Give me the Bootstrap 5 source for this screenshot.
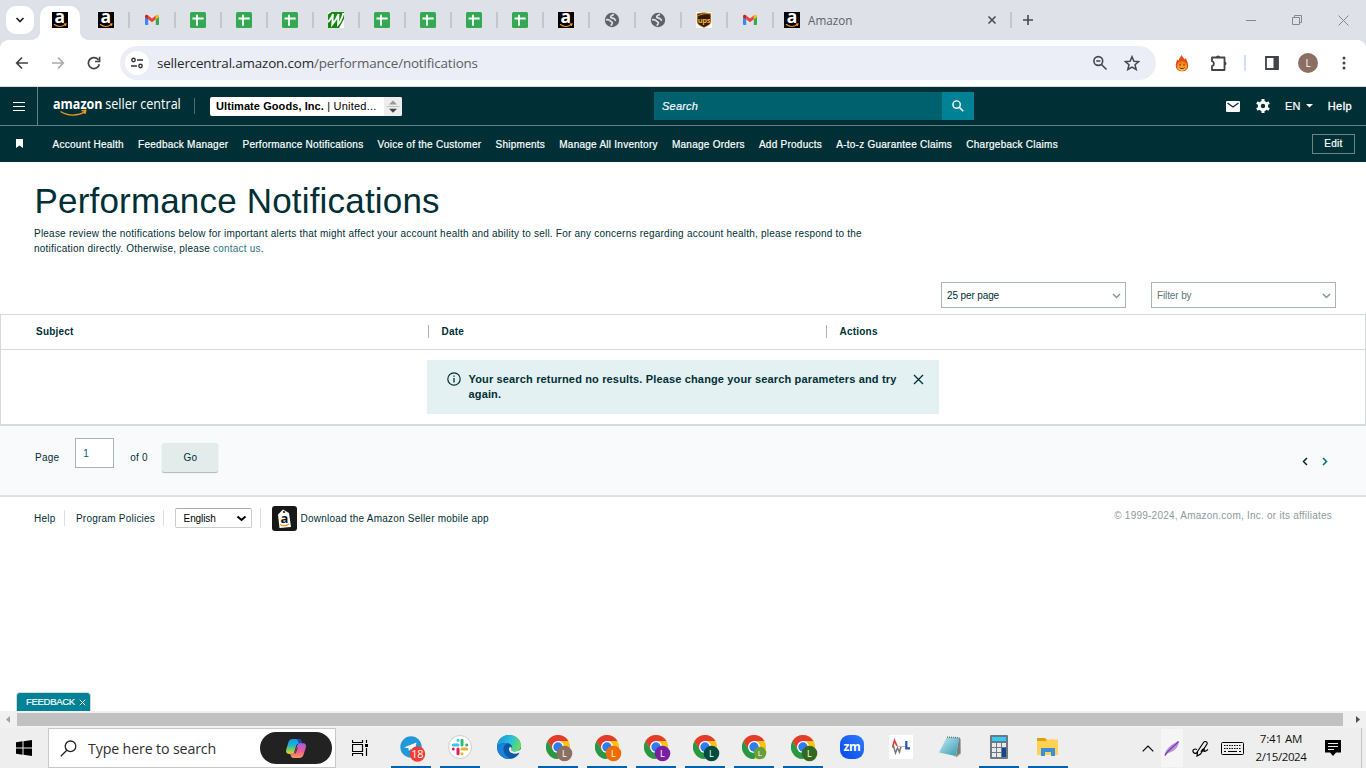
<!DOCTYPE html>
<html lang="en">
<head>
<meta charset="utf-8">
<title>Performance Notifications</title>
<link href="https://cdn.jsdelivr.net/npm/bootstrap@5.3.0/dist/css/bootstrap.min.css" rel="stylesheet">
<style>
body{width:1366px;height:768px;overflow:hidden;font-family:"Liberation Sans",Arial,sans-serif;font-size:10px;letter-spacing:.22px;line-height:15px;color:#002f36;background:#fff}
svg{display:block;flex:none}
.seg{font-family:"Open Sans","Noto Sans",sans-serif;letter-spacing:0}
.tabstrip{height:40px;background:#dee1e8}
.tabmenu{width:28px;height:28px;border-radius:10px;background:#fff;margin:6px 6px 0}
.tab-on{width:40px;height:34px;margin-top:6px;padding-top:6px;background:#fff;border-radius:10px 10px 0 0;position:relative}
.tab-on::before,.tab-on::after{content:"";position:absolute;bottom:0;width:8px;height:8px}
.tab-on::before{left:-8px;background:radial-gradient(circle at 0 0,transparent 7.6px,#fff 8px)}
.tab-on::after{right:-8px;background:radial-gradient(circle at 100% 0,transparent 7.6px,#fff 8px)}
.tab-set{margin-left:2px}
.fav{width:46px;height:40px;padding-left:16px}
.fav::after{content:"";width:2px;height:16px;background:#c6c6c6;margin-right:-2px}
.tab-wide{width:239px;padding-left:12px}
.tab-name{font-size:11.7px;color:#5f6368;margin:1px auto 0 8px}
.tab-end{width:2px;height:16px;background:#c6c6c6;margin-right:-1px}
.toolbar{height:47px;background:#fff;border-bottom:1px solid #dadce0;position:relative}
.toolbar::before,.toolbar::after{content:"";position:absolute;top:0;width:8px;height:8px}
.toolbar::before{left:0;background:radial-gradient(circle at 100% 100%,transparent 7.6px,#dee1e8 8px)}
.toolbar::after{right:0;background:radial-gradient(circle at 0 100%,transparent 7.6px,#dee1e8 8px)}
.omni{width:1036px;height:34px;border-radius:17px;background:#ebeef7;margin-left:19px;padding-left:5px}
.site{width:24px;height:24px;border-radius:50%;background:#fff}
.url{font-size:13.4px;letter-spacing:-.155px;color:#5a5d61;margin-left:8px}
.url b{font-weight:400;color:#26282b}
.avatar{width:20px;height:20px;border-radius:50%;background:#8d6e63;color:#fff;font-size:10px;margin-left:19px}
.sc-top{height:39px;background:#002f36;border-bottom:1px solid #647f83;color:#fff;font-size:11px}
.burger{width:38px;height:38px;border-right:1px solid #647f83}
.brand{width:128px;height:24px;margin-left:14.5px}
.brand-bar{width:1px;height:16px;background:#4d6b70;margin-left:13.5px}
.account{width:192px;height:19px;margin-left:15px;background:#fff;border-radius:2px;color:#000;overflow:hidden;padding-left:6px;line-height:19px}
.account b{letter-spacing:.08px}
.spin{width:18px;height:19px;background:#ededed}
.search-in{width:288px;height:28px;margin-left:252px;background:#00616e;padding-left:8px;line-height:28px;font-style:italic;-webkit-text-stroke:.15px #fff}
.search-go{width:32px;height:28px;background:#008296}
.sc-nav{height:36px;background:#002f36;color:#fff;font-size:10px;letter-spacing:.255px;-webkit-text-stroke:.2px #fff;padding:1px 11px 0 15.5px}
.sc-links{gap:14.2px;margin-left:30px}
.edit{width:43px;height:20px;border:1px solid #6b8488;line-height:18px;margin-top:-2px}
.page{height:549px;position:relative}
.title{font-size:35px;line-height:42px;letter-spacing:.18px;font-weight:400;margin:0;padding:18px 0 0 34.5px}
.intro{width:860px;padding:4px 0 0 34px;letter-spacing:.222px}
.filters{height:26px;margin-top:26px;padding-right:30px;gap:25px}
.dropbox{width:185px;height:26px;border:1px solid #a5b5b7;padding:0 4px 0 5px;letter-spacing:-.12px}
.grid-box{height:112px;margin-top:6px;border:1px solid #d5dbdb;border-bottom:2px solid #d5dbdb}
.grid-head{height:35px;border-bottom:1px solid #d5dbdb;font-weight:700;padding-bottom:1px}
.grid-head div{line-height:13px}
.grid-head div+div{border-left:1px solid #a5b5b7;padding-left:12.5px}
.notice{width:512px;height:54px;margin:10px 0 0 426px;background:#e3f1f2;padding:12px 15px 0 20px;font-size:11px;font-weight:700;letter-spacing:.153px}
.pager{height:71px;background:#f9fafb;border-bottom:2px solid #dfe2e4;padding-left:35px}
.pageno{width:39px;height:30px;border:1px solid #a5b5b7;background:#fff;padding-left:7px;line-height:29px;margin:12px 0 0 16px;color:#00606e}
.go{width:56px;height:29px;background:#e3eceb;border-radius:2px;box-shadow:0 1px 1px #aab7b8;line-height:29px;margin:17px 0 0 14.5px}
.foot{height:42px;padding:0 34px}
.vr-line{width:1px;height:16px;background:#dcdfe1}
.lang{width:77px;height:20px;border:1px solid #ccc;border-top-color:#aaa;border-radius:2px;padding:0 4px 0 8px;color:#000;letter-spacing:-.1px}
.feedback{position:absolute;left:16px;bottom:0;width:75px;height:19px;background:#008296;border:1px solid #d5dbdb;border-bottom:0;border-radius:4px 4px 0 0;color:#fff;font-size:9.6px;letter-spacing:-.36px;line-height:18px;padding-left:9px;-webkit-text-stroke:.15px #fff}
.hscroll{height:17px;background:#f1f1f1}
.thumb{width:1326px;height:13px;background:#c1c1c1}
.taskbar{height:40px;background:#eee;color:#000}
.start{width:48px;height:40px}
.winsearch{width:288px;height:40px;background:#fff;border:1px solid #c8c8c8;padding-left:11px;font-size:14.2px;color:#303030}
.copilot{width:72px;height:32px;border-radius:16px;background:#222;margin-right:3px}
.app{width:40px;height:40px;margin-right:9px;border-bottom:2px solid transparent}
.open{border-color:#0063b1}
.badged{margin:3px 0 0 3px}
.clock{width:70px;font-size:11.5px;line-height:18px;letter-spacing:-.4px;color:#111;margin-left:2px}
</style>
</head>
<body class="d-flex flex-column">
<svg width="0" height="0" class="position-absolute" aria-hidden="true">
<defs>
<linearGradient id="cpa" x1="0" y1="0" x2="0" y2="1"><stop offset="0" stop-color="#1797e8"/><stop offset=".45" stop-color="#20b8c8"/><stop offset=".75" stop-color="#8bd04a"/><stop offset="1" stop-color="#f7c82e"/></linearGradient>
<linearGradient id="cpb" x1="0" y1="0" x2="0" y2="1"><stop offset="0" stop-color="#a45de8"/><stop offset=".55" stop-color="#ee5c93"/><stop offset="1" stop-color="#f99a55"/></linearGradient>
<linearGradient id="edg" x1="0" y1=".2" x2="1" y2=".5"><stop offset="0" stop-color="#1b8fe0"/><stop offset=".55" stop-color="#2bc0dc"/><stop offset="1" stop-color="#66e05a"/></linearGradient>
<linearGradient id="fire" x1="0" y1="0" x2="0" y2="1"><stop offset="0" stop-color="#f0701a"/><stop offset="1" stop-color="#fbc02d"/></linearGradient>
<linearGradient id="zoomg" x1="0" y1="1" x2="1" y2="0"><stop offset="0" stop-color="#0848e8"/><stop offset="1" stop-color="#2f7bff"/></linearGradient>
<linearGradient id="noteg" x1="0" y1="0" x2="1" y2="1"><stop offset="0" stop-color="#c9edf3"/><stop offset="1" stop-color="#2f97ae"/></linearGradient>
</defs>
</svg>
<svg class="d-none" aria-hidden="true">
<symbol id="amz" viewBox="0 0 16 16"><path fill="#000" d="M0 0h16v16H0z"/><text x="8" y="11.2" font-family="Open Sans,sans-serif" font-size="17.5" font-weight="700" text-anchor="middle" fill="#fff">a</text><path d="M2 12.300c3.500 2.600 8 2.500 11.300.3M11.800 12l2.200-.1-.6 1.900" fill="none" stroke="#f7981d" stroke-width="1.100"/></symbol>
<symbol id="gml" viewBox="0 0 16 16"><path fill="#4285f4" d="M1 4.500v7.700c0 .5.400.8.800.8h2.400V7z"/><path fill="#34a853" d="M15 4.500v7.700c0 .5-.4.800-.8.800h-2.400V7z"/><path fill="#ea4335" d="M4.200 3.500L8 6.400l3.800-2.900V7.300L8 10.200 4.200 7.300z"/><path fill="#fbbc04" d="M11.800 3.500c1.400-1.200 3.200-.6 3.200 1v.6l-3.200 2.300z"/><path fill="#c5221f" d="M4.200 3.500C2.800 2.300 1 2.900 1 4.500v.6l3.200 2.300z"/></symbol>
<symbol id="sht" viewBox="0 0 16 16"><rect width="16" height="16" rx="1.500" fill="#34a853"/><path d="M2.500 6.500h11.200M7 2.800v11" stroke="#fff" stroke-width="1.800"/></symbol>
<symbol id="glb" viewBox="0 0 16 16"><circle cx="8" cy="8" r="7.200" fill="#5f6368"/><path d="M2 7.800c1.800-.4 3.600.1 4.400 1.200.7 1 2.200.6 2 2-.2 1.300-1 1.900-1.700 2.600" fill="none" stroke="#dee1e8" stroke-width="1.700"/><path d="M9.800 2.300C8 3.600 6.200 3.700 6.700 5.200c.6 1.300 2.300.6 3.400 1.500.9.800.8 1.500 2 1.700" fill="none" stroke="#dee1e8" stroke-width="1.700"/></symbol>
<symbol id="chr" viewBox="0 0 24 24"><circle cx="12" cy="12" r="12" fill="#fbc116"/><path fill="#e33b2e" d="M1.600 6A12 12 0 0 1 22.400 6H12L6.800 15z"/><path fill="#279847" d="M1.600 6A12 12 0 0 0 12 24l5.200-9L12 17.500 6.800 15z"/><circle cx="12" cy="12" r="6" fill="#fff"/><circle cx="12" cy="12" r="4.700" fill="#2e7cee"/></symbol>
</svg>

<header class="tabstrip d-flex">
  <div class="tabmenu d-flex align-items-center justify-content-center"><svg width="10" height="8" viewBox="0 0 10 8"><path d="M1.500 2L5 5.500 8.500 2" fill="none" stroke="#202124" stroke-width="1.700"/></svg></div>
  <div class="tab-on d-flex justify-content-center"><svg width="16" height="16"><use href="#amz"/></svg></div>
  <div class="tab-set d-flex">
    <div class="fav d-flex align-items-center justify-content-between"><svg width="16" height="16"><use href="#amz"/></svg></div>
    <div class="fav d-flex align-items-center justify-content-between"><svg width="16" height="16"><use href="#gml"/></svg></div>
    <div class="fav d-flex align-items-center justify-content-between"><svg width="16" height="16"><use href="#sht"/></svg></div>
    <div class="fav d-flex align-items-center justify-content-between"><svg width="16" height="16"><use href="#sht"/></svg></div>
    <div class="fav d-flex align-items-center justify-content-between"><svg width="16" height="16"><use href="#sht"/></svg></div>
    <div class="fav d-flex align-items-center justify-content-between"><svg width="16" height="16" viewBox="0 0 16 16"><rect width="16" height="16" fill="#138808"/><path d="M0 2.500L3.500 0H0zM11 16l5-9v9z" fill="#fff"/><path d="M0 10C2 8 4 5 5 2L4.200 12.500C6.500 10 9 6 10.500 2L10 12.500C12 10.500 14 6 15.500 1" fill="none" stroke="#fff" stroke-width="1.900"/></svg></div>
    <div class="fav d-flex align-items-center justify-content-between"><svg width="16" height="16"><use href="#sht"/></svg></div>
    <div class="fav d-flex align-items-center justify-content-between"><svg width="16" height="16"><use href="#sht"/></svg></div>
    <div class="fav d-flex align-items-center justify-content-between"><svg width="16" height="16"><use href="#sht"/></svg></div>
    <div class="fav d-flex align-items-center justify-content-between"><svg width="16" height="16"><use href="#sht"/></svg></div>
    <div class="fav d-flex align-items-center justify-content-between"><svg width="16" height="16"><use href="#amz"/></svg></div>
    <div class="fav d-flex align-items-center justify-content-between"><svg width="16" height="16"><use href="#glb"/></svg></div>
    <div class="fav d-flex align-items-center justify-content-between"><svg width="16" height="16"><use href="#glb"/></svg></div>
    <div class="fav d-flex align-items-center justify-content-between"><svg width="16" height="16" viewBox="0 0 16 16"><path fill="#fff" d="M0 0h16v16H0z"/><path fill="#33190b" stroke="#d79a23" stroke-width=".7" d="M1.200 1.800Q8-.5 14.800 1.800V9.500c0 3-3 4-6.800 6-3.800-2-6.800-3-6.800-6z"/><path d="M1.500 4.200C6 1.300 11 1.300 14.500 2" stroke="#d79a23" fill="none"/><text x="8" y="10.500" text-anchor="middle" font-family="Open Sans,sans-serif" font-size="7.500" font-weight="700" fill="#f5b32b" letter-spacing="-.3">ups</text></svg></div>
    <div class="fav d-flex align-items-center justify-content-between"><svg width="16" height="16"><use href="#gml"/></svg></div>
  </div>
  <div class="tab-wide seg d-flex align-items-center">
    <svg width="16" height="16"><use href="#amz"/></svg>
    <span class="tab-name">Amazon</span>
    <svg width="10" height="10" viewBox="0 0 10 10" style="margin-right:13px"><path d="M1.500 1.500l7 7m0-7l-7 7" stroke="#45484c" stroke-width="1.500"/></svg>
    <div class="tab-end"></div>
  </div>
  <svg class="align-self-center" width="12" height="12" viewBox="0 0 12 12" style="margin-left:11px"><path d="M1 6h10M6 1v10" stroke="#45484c" stroke-width="1.600"/></svg>
  <div class="d-flex align-items-center ms-auto" style="gap:36px;padding-right:17px">
    <svg width="10" height="10" viewBox="0 0 10 10"><path d="M0 5.500h10" stroke="#888"/></svg>
    <svg width="10" height="10" viewBox="0 0 10 10"><path d="M.5 2.500h7v7h-7zM2.500 2.500v-2h7v7h-2" fill="none" stroke="#888"/></svg>
    <svg width="11" height="11" viewBox="0 0 11 11"><path d="M.5.5l10 10m0-10l-10 10" stroke="#888"/></svg>
  </div>
</header>

<div class="toolbar d-flex align-items-center">
  <svg width="14" height="14" viewBox="0 0 14 14" style="margin-left:15px"><path d="M13 7H2M7 1.500L1.700 7 7 12.500" fill="none" stroke="#404347" stroke-width="1.700"/></svg>
  <svg width="14" height="14" viewBox="0 0 14 14" style="margin-left:22px"><path d="M1 7h11M7 1.500L12.300 7 7 12.500" fill="none" stroke="#a9abae" stroke-width="1.700"/></svg>
  <svg width="14" height="14" viewBox="0 0 14 14" style="margin-left:22px"><path d="M12.300 8.200A5.500 5.500 0 1 1 11.500 4" fill="none" stroke="#404347" stroke-width="1.700"/><path d="M12.600.800v4.700H8" fill="none" stroke="#404347" stroke-width="1.600"/></svg>
  <div class="omni d-flex align-items-center">
    <div class="site d-flex align-items-center justify-content-center"><svg width="14" height="12" viewBox="0 0 14 12"><circle cx="3.500" cy="3" r="1.700" fill="none" stroke="#303236" stroke-width="1.400"/><circle cx="10.500" cy="9" r="1.700" fill="none" stroke="#303236" stroke-width="1.400"/><path d="M7 3h6M1 9h6" stroke="#303236" stroke-width="1.600"/></svg></div>
    <span class="url seg"><b>sellercentral.amazon.com</b>/performance/notifications</span>
    <svg class="ms-auto" width="16" height="16" viewBox="0 0 16 16"><circle cx="6.300" cy="6" r="4.400" fill="none" stroke="#45484c" stroke-width="1.600"/><path d="M9.500 9.500l5 5M4.200 6h4.200" stroke="#45484c" stroke-width="1.600"/></svg>
    <svg width="16" height="16" viewBox="0 0 16 16" style="margin:0 16px"><path d="M8 1.700l1.900 4.500 4.800.4-3.700 3.200 1.200 4.700L8 12l-4.200 2.500L5 9.800 1.300 6.600l4.800-.4z" fill="none" stroke="#45484c" stroke-width="1.500"/></svg>
  </div>
  <svg width="14" height="17" viewBox="0 0 14 17" style="margin-left:19px"><path d="M6.500 0c.5 1.500 2 2.500 3 4.500L10.800 3c.3 2 2.400 4 2.400 7.500 0 3.700-2.700 5.800-6.200 5.800S.8 14.200.8 10.500c0-2.500 1-4 1.200-6l1.600 1.300C4 3.500 5.500 2 6.500 0z" fill="#e04a14"/><circle cx="7" cy="11" r="5" fill="url(#fire)"/><path d="M5 9v1.600M9 9v1.600M4.500 12.500c1.200 1.500 3.800 1.500 5 0" fill="none" stroke="#6b1d08" stroke-width=".9"/></svg>
  <svg width="18" height="18" viewBox="0 0 18 18" style="margin-left:21px"><path d="M2 3.500h12.500v12.500H2v-3.800a2.600 2.600 0 0 0 0-5z" fill="none" stroke="#404347" stroke-width="1.800" stroke-linejoin="round"/><path fill="#404347" d="M6 3.500a2 2 0 0 1 4 0zM14.500 7.500a2 2 0 0 1 0 4z"/></svg>
  <div style="width:2px;height:16px;background:#d0def8;margin-left:16px"></div>
  <svg width="14" height="14" viewBox="0 0 14 14" style="margin-left:19px"><path d="M1 1h12v12H1z" fill="none" stroke="#404347" stroke-width="1.800"/><path fill="#404347" d="M8.500 1H13v12H8.500z"/></svg>
  <div class="avatar seg d-flex align-items-center justify-content-center">L</div>
  <svg width="4" height="14" viewBox="0 0 4 14" style="margin-left:24px" fill="#404347"><circle cx="2" cy="2" r="1.500"/><circle cx="2" cy="7" r="1.500"/><circle cx="2" cy="12" r="1.500"/></svg>
</div>

<div class="sc-top d-flex align-items-center">
  <div class="burger d-flex align-items-center justify-content-center"><svg width="12" height="9" viewBox="0 0 12 9"><path d="M0 .5h12M0 4.500h12M0 8.500h12" stroke="#fff" stroke-width="1.200"/></svg></div>
  <svg class="brand" viewBox="0 0 128 24" fill="#fff" font-family="Open Sans,sans-serif" letter-spacing="0"><text x="0" y="15" font-size="13.500" font-weight="700" textLength="49.500" lengthAdjust="spacingAndGlyphs">amazon</text><text x="52.300" y="14.800" font-size="14.500" textLength="75.500" lengthAdjust="spacingAndGlyphs">seller central</text><path d="M7.500 17.500c7.500 5 18 4.500 24.500.2M28.500 16.800l4.300-.4-1 3.600" fill="none" stroke="#f7981d" stroke-width="1.400"/></svg>
  <div class="brand-bar"></div>
  <div class="account d-flex justify-content-between"><span><b>Ultimate Goods, Inc.</b> | United...</span>
    <div class="spin"><svg width="18" height="19" viewBox="0 0 18 19"><path fill="#999" d="M5 7.500L9 3.500l4 4z"/><path d="M2.500 9.500h13" stroke="#c2c2c2"/><path fill="#444" d="M5 11.800h8L9 15.800z"/></svg></div>
  </div>
  <div class="search-in">Search</div>
  <div class="search-go d-flex align-items-center justify-content-center"><svg width="12" height="12" viewBox="0 0 12 12"><circle cx="4.600" cy="4.600" r="3.700" fill="none" stroke="#fff" stroke-width="1.400"/><path d="M7.300 7.300l4 4" stroke="#fff" stroke-width="1.600"/></svg></div>
  <div class="d-flex align-items-center ms-auto" style="padding-right:14px">
    <svg width="14" height="11" viewBox="0 0 14 11"><rect width="14" height="11" rx="1" fill="#fff"/><path d="M1.500 2L7 6l5.500-4" fill="none" stroke="#002f36" stroke-width="1.300"/></svg>
    <svg width="14" height="14" viewBox="0 0 14 14" style="margin-left:16px"><circle cx="7" cy="7" r="3.700" fill="none" stroke="#fff" stroke-width="3"/><path d="M7 0v14M.9 3.500l12.200 7M.9 10.500l12.200-7" stroke="#fff" stroke-width="3"/><circle cx="7" cy="7" r="2.200" fill="#002f36"/></svg>
    <span style="margin-left:15px;-webkit-text-stroke:.2px">EN</span>
    <svg width="7" height="4" viewBox="0 0 7 4" style="margin-left:5px"><path fill="#fff" d="M0 0h7L3.500 3.500z"/></svg>
    <span style="margin-left:15px;letter-spacing:.4px;-webkit-text-stroke:.3px">Help</span>
  </div>
</div>

<nav class="sc-nav d-flex align-items-center">
  <svg width="7" height="9" viewBox="0 0 7 9" style="margin-top:-2px"><path fill="#fff" d="M0 0h7v9L3.500 6.500 0 9z"/></svg>
  <div class="sc-links d-flex">
    <span>Account Health</span><span>Feedback Manager</span><span>Performance Notifications</span><span>Voice of the Customer</span><span>Shipments</span><span>Manage All Inventory</span><span>Manage Orders</span><span>Add Products</span><span>A-to-z Guarantee Claims</span><span>Chargeback Claims</span>
  </div>
  <div class="edit ms-auto text-center">Edit</div>
</nav>

<main class="page">
  <h1 class="title">Performance Notifications</h1>
  <div class="intro text-nowrap">Please review the notifications below for important alerts that might affect your account health and ability to sell. For any concerns regarding account health, please respond to the<br>notification directly. Otherwise, please <span style="color:#2c7482">contact us</span>.</div>
  <div class="filters d-flex justify-content-end">
    <div class="dropbox d-flex align-items-center justify-content-between">25 per page <svg width="9" height="6" viewBox="0 0 9 6" style="margin-top:2px"><path d="M1 1l3.500 3.500L8 1" fill="none" stroke="#879596" stroke-width="1.500"/></svg></div>
    <div class="dropbox d-flex align-items-center justify-content-between" style="color:#5b767a">Filter by <svg width="9" height="6" viewBox="0 0 9 6" style="margin-top:2px"><path d="M1 1l3.500 3.500L8 1" fill="none" stroke="#879596" stroke-width="1.500"/></svg></div>
  </div>
  <section class="grid-box">
    <div class="grid-head d-flex align-items-center">
      <div style="width:427px;padding-left:35px">Subject</div><div style="width:398px">Date</div><div>Actions</div>
    </div>
    <div class="notice d-flex align-items-start">
      <svg width="14" height="14" viewBox="0 0 14 14"><circle cx="7" cy="7" r="6.200" fill="none" stroke="#002f36" stroke-width="1.200"/><path d="M7 6v4.500M7 3.500v1.300" stroke="#002f36" stroke-width="1.300"/></svg>
      <div class="text-nowrap" style="margin-left:7.500px">Your search returned no results. Please change your search parameters and try<br>again.</div>
      <svg class="ms-auto" width="11" height="11" viewBox="0 0 11 11" style="margin-top:1.500px"><path d="M1 1l9 9m0-9l-9 9" stroke="#002f36" stroke-width="1.300"/></svg>
    </div>
  </section>
  <section class="pager d-flex align-items-start">
    <span style="margin-top:24px">Page</span>
    <div class="pageno">1</div>
    <span style="margin:24px 0 0 16px">of 0</span>
    <div class="go text-center">Go</div>
    <div class="d-flex ms-auto" style="margin:31px 38px 0 0;gap:14px">
      <svg width="6" height="9" viewBox="0 0 6 9"><path d="M5 1L1.500 4.500 5 8" fill="none" stroke="#002f36" stroke-width="1.500"/></svg>
      <svg width="6" height="9" viewBox="0 0 6 9"><path d="M1 1l3.500 3.500L1 8" fill="none" stroke="#007185" stroke-width="1.500"/></svg>
    </div>
  </section>
  <footer class="foot d-flex align-items-center">
    <span>Help</span><i class="vr-line" style="margin:0 11px 0 8.500px"></i><span>Program Policies</span><i class="vr-line" style="margin:0 11px 0 7.500px"></i>
    <div class="lang d-flex align-items-center justify-content-between"><span>English</span><svg width="11" height="7" viewBox="0 0 11 7"><path d="M1.500 1.500L5.500 5l4-3.500" fill="none" stroke="#000" stroke-width="2"/></svg></div>
    <i class="vr-line" style="height:20px;margin:0 11px 0 8px"></i>
    <svg width="25" height="25" viewBox="0 0 25 25"><rect width="25" height="25" rx="3" fill="#171717"/><path fill="#fff" d="M6 8.500l5-5 6 3.500 2 14L7.500 22z"/><circle cx="12" cy="6" r="1.100" fill="#171717"/><text x="12.500" y="16.500" text-anchor="middle" font-family="Open Sans,sans-serif" font-size="13" font-weight="700" fill="#111">a</text><path d="M8 18.500c3 1.800 6 1.500 9-.6" fill="none" stroke="#f7981d" stroke-width="1.200"/></svg>
    <span style="margin-left:4px">Download the Amazon Seller mobile app</span>
    <span class="ms-auto" style="color:#8f9a9b;margin-top:-5px;letter-spacing:.235px">© 1999-2024, Amazon.com, Inc. or its affiliates</span>
  </footer>
  <div class="feedback d-flex align-items-center">FEEDBACK<svg width="7" height="7" viewBox="0 0 7 7" style="margin-left:4px"><path d="M.7.7l5.600 5.600m0-5.600L.7 6.300" stroke="#fff"/></svg></div>
</main>

<div class="hscroll d-flex align-items-center justify-content-between">
  <svg width="17" height="17" viewBox="0 0 17 17"><path fill="#a3a3a3" d="M10 5v7L6 8.500z"/></svg>
  <div class="thumb"></div>
  <svg width="17" height="17" viewBox="0 0 17 17" style="margin-left:6px"><path fill="#505050" d="M7 5v7l4-3.500z"/></svg>
</div>

<div class="taskbar d-flex align-items-center">
  <div class="start d-flex align-items-center justify-content-center"><svg width="16" height="16" viewBox="0 0 16 16"><path d="M0 2.300L6.500 1.300v6.300H0zM7.500 1.200L16 0v7.600H7.500zM0 8.500h6.500v6.300L0 13.800zM7.500 8.500H16V16l-8.500-1.200z"/></svg></div>
  <div class="winsearch seg d-flex align-items-center">
    <svg width="17" height="17" viewBox="0 0 17 17"><circle cx="10.500" cy="6.300" r="5.300" fill="none" stroke="#222" stroke-width="1.300"/><path d="M6.800 10.200L.8 16.200" stroke="#222" stroke-width="1.300"/></svg>
    <span style="margin-left:11px;letter-spacing:-.13px">Type here to search</span>
    <div class="copilot d-flex align-items-center justify-content-center ms-auto"><svg width="22" height="21" viewBox="0 0 22 21"><path d="M8 1h5.500c2 0 2.500 1.500 3 3l.5 1.500h-3c-1.800 0-2.400 1.200-3 3l-1.600 5C9 15 8.300 16 6.500 16H4c-2.700 0-3.500-2-2.700-4.700l2-6.500C4 2.500 5 1 8 1z" fill="url(#cpa)"/><path d="M11 1.200c1.500.3 2 1.600 2.300 2.800l.5 1.600H17L16.500 4c-.5-1.500-1-2.900-3-2.900z" fill="#1d48b8"/><path d="M14 20H8.500c-2 0-2.500-1.500-3-3L5 15.500h2c1.800 0 2.800-1.200 3.300-2.500l1.700-5c.5-1.500 1.200-2.800 3-2.800h3c2.700 0 3.500 2 2.700 4.700l-2 6.400C18 18.500 17 20 14 20z" fill="url(#cpb)"/><path d="M11.700 9.500h1.200L10.800 15.500H9.500l1-2.500z" fill="#222" opacity=".7"/></svg></div>
  </div>
  <svg width="17" height="16" viewBox="0 0 17 16" style="margin-left:16px"><path d="M.5 0v2.500h10V0M.5 4.500h10v7H.5zM.5 16v-2.500h10V16M14.500 0v3M14.500 8v8" fill="none" stroke="#000" stroke-width="1.200"/><path d="M13 4h3v3h-3z"/></svg>
  <div class="d-flex" style="margin-left:22px">
    <div class="app open d-flex align-items-center justify-content-center"><svg width="26" height="26" viewBox="0 0 26 26" style="margin:4px 0 0 4px"><circle cx="11" cy="11" r="10.700" fill="#2299d6"/><path fill="#fff" d="M4 11.500L16.500 6.500 14.500 16l-4-3-1.500 2-.7-3z"/><circle cx="17.500" cy="18" r="7.700" fill="#f33b32"/><text x="17.300" y="22" text-anchor="middle" font-family="Open Sans,sans-serif" font-size="11" fill="#fff" letter-spacing="-.3">18</text></svg></div>
    <div class="app open d-flex align-items-center justify-content-center"><svg width="24" height="24" viewBox="0 0 24 24"><circle cx="12" cy="12" r="11.500" fill="#fff" stroke="#ccc"/><g fill="none" stroke-width="3" stroke-linecap="round"><path stroke="#36c5f0" d="M10 5.300v0M5.300 10h4.700"/><path stroke="#2eb67d" d="M14 5.300v4.700M18.700 10v0"/><path stroke="#ecb22e" d="M14 18.700v0M14 14h4.700"/><path stroke="#e01e5a" d="M10 14v4.700M5.300 14v0"/></g></svg></div>
    <div class="app d-flex align-items-center justify-content-center"><svg width="24" height="24" viewBox="0 0 24 24"><circle cx="12" cy="12" r="12" fill="#0c59a4"/><path fill="url(#edg)" d="M0 11.500C.5 4.500 6 0 12 0c7 0 12 5 12 10.500 0 4-3 6-6.500 6-2.800 0-4-1-3.500-1.800 2-2.200 1-6-3-6.500C6 7.700 1.500 9.500 0 11.500z"/><path fill="#1683d8" d="M0 12c2-3.500 7-4.500 11-3.800C7 9 5.500 13 7 17c1 3 3.500 5.600 7.500 6.800C6 25 0 19 0 12z"/><path fill="#eee" d="M25 13v6l-3-1.300c-3 1.800-8 1.300-9.600-1.700-.8-1.500-.4-3.500 1-4.300 1.600 1 1.400 2.200.6 3.300 1 2.200 7.600 2 10-1z"/></svg></div>
    <div class="app open d-flex align-items-center justify-content-center"><svg class="badged" width="27" height="27" viewBox="0 0 27 27"><use href="#chr" width="24" height="24"/><circle cx="18.500" cy="18.500" r="7.800" fill="#8d6e63"/><text x="18.500" y="22" text-anchor="middle" font-family="Open Sans,sans-serif" font-size="9" fill="#fff">L</text></svg></div>
    <div class="app open d-flex align-items-center justify-content-center"><svg class="badged" width="27" height="27" viewBox="0 0 27 27"><use href="#chr" width="24" height="24"/><circle cx="18.500" cy="18.500" r="7.800" fill="#ef6c00"/><text x="18.500" y="22" text-anchor="middle" font-family="Open Sans,sans-serif" font-size="9" fill="#fff">L</text></svg></div>
    <div class="app open d-flex align-items-center justify-content-center"><svg class="badged" width="27" height="27" viewBox="0 0 27 27"><use href="#chr" width="24" height="24"/><circle cx="18.500" cy="18.500" r="7.800" fill="#7b1fa2"/><text x="18.500" y="22" text-anchor="middle" font-family="Open Sans,sans-serif" font-size="9" fill="#fff">L</text></svg></div>
    <div class="app open d-flex align-items-center justify-content-center"><svg class="badged" width="27" height="27" viewBox="0 0 27 27"><use href="#chr" width="24" height="24"/><circle cx="18.500" cy="18.500" r="7.800" fill="#004d40"/><text x="18.500" y="22" text-anchor="middle" font-family="Open Sans,sans-serif" font-size="9" fill="#fff">L</text></svg></div>
    <div class="app open d-flex align-items-center justify-content-center"><svg class="badged" width="27" height="27" viewBox="0 0 27 27"><use href="#chr" width="24" height="24"/><circle cx="18" cy="18" r="6.300" fill="#689f38"/><text x="18" y="21" text-anchor="middle" font-family="Open Sans,sans-serif" font-size="8" fill="#fff">L</text></svg></div>
    <div class="app open d-flex align-items-center justify-content-center"><svg class="badged" width="27" height="27" viewBox="0 0 27 27"><use href="#chr" width="24" height="24"/><circle cx="18.500" cy="18.500" r="7.800" fill="#33691e"/><text x="18.500" y="22" text-anchor="middle" font-family="Open Sans,sans-serif" font-size="9" fill="#fff">L</text></svg></div>
    <div class="app d-flex align-items-center justify-content-center"><svg width="24" height="24" viewBox="0 0 24 24"><rect width="24" height="24" rx="9" fill="url(#zoomg)"/><text x="12" y="15.800" text-anchor="middle" font-family="Open Sans,sans-serif" font-size="12" font-weight="700" fill="#fff" letter-spacing="-.2">zm</text></svg></div>
    <div class="app d-flex align-items-center justify-content-center"><svg width="24" height="24" viewBox="0 0 24 24"><path fill="#fff" d="M0 0h24v24H0z"/><path d="M3.500 12.500L5.500 5.500 8 11" fill="none" stroke="#e0403c" stroke-width="1.700"/><path d="M4.500 11l2 7 2-5 2 4 1.500-6" fill="none" stroke="#777" stroke-width="1.500"/><path d="M8 11.500h9" stroke="#bbb"/><path d="M17.300 6v7.300H21" fill="none" stroke="#2456b8" stroke-width="2.200"/></svg></div>
    <div class="app d-flex align-items-center justify-content-center"><svg width="24" height="24" viewBox="0 0 24 24"><path fill="#d8c9a0" d="M22 4l1 15-4 3.500-3-1z"/><path fill="#777d80" d="M21 2l1.500 2v14L18 22z"/><path fill="url(#noteg)" d="M9 2l12.500.5L17.500 21 1 17.500z"/><path d="M9 2.200l12 .6" stroke="#777" stroke-width="1.600" stroke-dasharray="1 1"/></svg></div>
    <div class="app open d-flex align-items-center justify-content-center"><svg width="18" height="24" viewBox="0 0 18 24"><rect width="18" height="24" rx="1" fill="#6d7883"/><path fill="#32cdf2" d="M2 2h14v4H2z"/><path fill="#e8eaec" d="M2 8h4v4H2zM7 8h4v4H7zM12 8h4v4h-4zM2 13h4v4H2zM7 13h4v4H7zM2 18h4v4H2zM7 18h4v4H7z"/><path fill="#12468f" d="M12 13h4v9h-4z"/></svg></div>
    <div class="app open d-flex align-items-center justify-content-center"><svg width="22" height="20" viewBox="0 0 22 20"><path fill="#dfa00c" d="M0 1h8l2 2v4H0z"/><path fill="#ffd154" d="M0 4h9l1.500-1.500H21V18H0z"/><path fill="#3a8fd6" d="M4 11h14v8h-4v-4H8v4H4z"/></svg></div>
  </div>
  <div class="d-flex align-items-center ms-auto">
    <svg width="12" height="7" viewBox="0 0 12 7"><path d="M.7 6.300L6 1l5.300 5.300" fill="none" stroke="#000" stroke-width="1.200"/></svg>
    <div class="d-flex align-items-center justify-content-center" style="width:22px;height:38px;background:#f5f5f5;margin-left:7px"><svg width="16" height="17" viewBox="0 0 16 17"><path fill="#b993d4" d="M.5 16C1 9.500 6 5 15 1c-.5 6.500-5 11-11 12z"/><path d="M1 15.500C4 10 9 7.500 14.500 1.500" fill="none" stroke="#7b3fae" stroke-width="1.300"/></svg></div>
    <svg width="17" height="17" viewBox="0 0 17 17" style="margin-left:9px"><path d="M5 9.500C2 8 0 10.500 1.500 12.500c1.500 1.800 4.500.5 4-1.500M4.500 13L11.500 2.500c1.500-2 4.500-.5 3.500 1.500L8.500 14l-3.500 2 .5-4M9 12c2-4 4-4 3-1.500-.7 1.800 1.500 1 4-1" fill="none" stroke="#000" stroke-width="1.200"/></svg>
    <svg width="23" height="13" viewBox="0 0 23 13" style="margin-left:12px"><rect x=".5" y=".5" width="22" height="12" rx="1" fill="none" stroke="#000"/><path d="M3 3.500h17M3 6.500h17" stroke="#000" stroke-dasharray="1.500 1"/><path d="M3 9.500h2M7 9.500h9M18 9.500h2" stroke="#000"/></svg>
    <div class="clock seg text-center"><span style="letter-spacing:-.1px">7:41 AM</span><br>2/15/2024</div>
    <svg width="16" height="16" viewBox="0 0 16 16" style="margin-left:9px"><path d="M0 0h16v12.500h-5L8 16l-3-3.500H0z"/><path d="M3 3.500h10M3 6.500h10M3 9.500h6" stroke="#eee"/></svg>
    <div style="width:1px;height:40px;background:#c4c4c4;margin:0 4px 0 20px"></div>
  </div>
</div>
<script src="https://cdn.jsdelivr.net/npm/bootstrap@5.3.0/dist/js/bootstrap.bundle.min.js"></script>
</body>
</html>
